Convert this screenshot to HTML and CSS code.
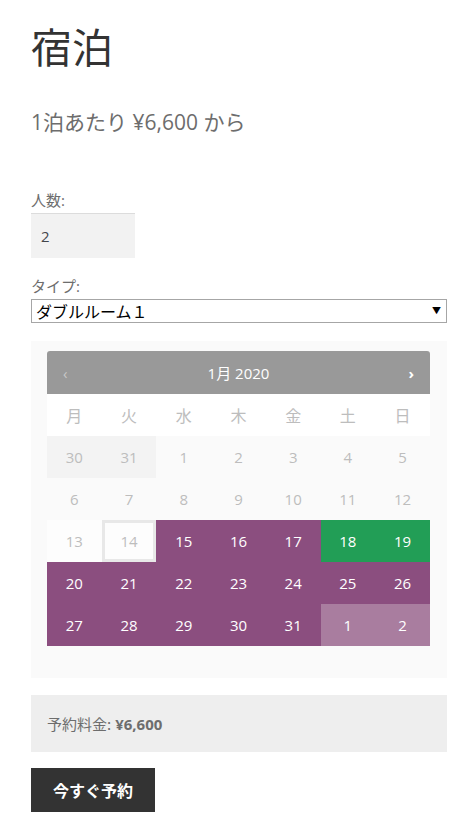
FILE: index.html
```html
<!DOCTYPE html>
<html lang="ja">
<head>
<meta charset="utf-8">
<title>宿泊</title>
<link rel="stylesheet" href="styles.css">
</head>
<body>
<div class="page">
  <h1 class="title">宿泊</h1>
  <p class="price-from">1泊あたり ¥6,600 から</p>

  <form class="booking">
    <div class="field">
      <label class="label" for="persons">人数:</label>
      <input class="persons" id="persons" type="text" value="2">
    </div>
    <div class="field field-type">
      <label class="label" for="type">タイプ:</label>
      <div class="select-wrap">
        <select class="select" id="type">
          <option>ダブルルーム１</option>
        </select>
      </div>
    </div>

    <div class="calendar">
      <div class="cal-head">
        <span class="cal-prev">‹</span>
        <span class="cal-month">1月 2020</span>
        <span class="cal-next">›</span>
      </div>
      <table class="cal-table">
        <thead>
          <tr><th>月</th><th>火</th><th>水</th><th>木</th><th>金</th><th>土</th><th>日</th></tr>
        </thead>
        <tbody>
          <tr>
            <td class="d-prev">30</td><td class="d-prev">31</td><td class="d-off">1</td><td class="d-off">2</td><td class="d-off">3</td><td class="d-off">4</td><td class="d-off">5</td>
          </tr>
          <tr>
            <td class="d-off">6</td><td class="d-off">7</td><td class="d-off">8</td><td class="d-off">9</td><td class="d-off">10</td><td class="d-off">11</td><td class="d-off">12</td>
          </tr>
          <tr>
            <td class="d-white">13</td><td class="d-today">14</td><td class="d-on">15</td><td class="d-on">16</td><td class="d-on">17</td><td class="d-sel">18</td><td class="d-sel">19</td>
          </tr>
          <tr>
            <td class="d-on">20</td><td class="d-on">21</td><td class="d-on">22</td><td class="d-on">23</td><td class="d-on">24</td><td class="d-on">25</td><td class="d-on">26</td>
          </tr>
          <tr>
            <td class="d-on">27</td><td class="d-on">28</td><td class="d-on">29</td><td class="d-on">30</td><td class="d-on">31</td><td class="d-next">1</td><td class="d-next">2</td>
          </tr>
        </tbody>
      </table>
    </div>

    <div class="total">予約料金: <strong class="total-amount">¥6,600</strong></div>

    <button class="book" type="button">今すぐ予約</button>
  </form>
</div>
</body>
</html>
```

FILE: styles.css
```css
* { box-sizing: border-box; }

html, body {
  margin: 0;
  padding: 0;
  background: #ffffff;
}

body {
  font-family: "Open Sans", "Noto Sans CJK JP", sans-serif;
  color: #6d6d6d;
  font-size: 15px;
}

.page {
  padding: 15px 19px 0 31px;
}

.title {
  margin: 0;
  font-family: "Noto Sans CJK JP", sans-serif;
  font-size: 41px;
  font-weight: 400;
  line-height: 60px;
  color: #333333;
}

.price-from {
  margin: 32px 0 0;
  font-size: 21px;
  line-height: 30px;
  color: #6d6d6d;
}

.booking {
  margin-top: 52px;
}

.field {
  display: flex;
  flex-direction: column;
  align-items: flex-start;
}

.label {
  font-size: 15px;
  line-height: 22px;
  color: #6d6d6d;
}

.persons {
  margin-top: 2px;
  width: 104px;
  height: 45px;
  padding: 0 10px;
  border: 0;
  border-top: 1px solid #dcdcdc;
  background: #f2f2f2;
  font-family: "Open Sans", sans-serif;
  font-size: 15px;
  color: #43454b;
  outline: none;
}

.field-type {
  margin-top: 17px;
  align-items: stretch;
}

.select-wrap {
  position: relative;
  margin-top: 2px;
}

.select {
  display: block;
  width: 100%;
  height: 24px;
  padding: 0 20px 0 4px;
  border: 1px solid #a6a6a6;
  border-radius: 0;
  background: #ffffff;
  -webkit-appearance: none;
  appearance: none;
  font-family: "Noto Sans CJK JP", sans-serif;
  font-size: 16px;
  line-height: 22px;
  color: #000000;
}

.select-wrap::after {
  content: "▼";
  position: absolute;
  right: 6px;
  top: 6px;
  font-size: 9px;
  line-height: 12px;
  color: #000000;
  pointer-events: none;
}

.calendar {
  margin-top: 18px;
  padding: 10px 17px 32px 16px;
  background: #fafafa;
}

.cal-head {
  display: flex;
  align-items: center;
  justify-content: space-between;
  height: 43px;
  padding: 0 16px 0 16px;
  background: #999999;
  border-radius: 3px 3px 0 0;
  color: #ffffff;
}

.cal-prev {
  font-size: 15px;
  color: #c8c8c8;
  width: 10px;
}

.cal-next {
  font-size: 15px;
  font-weight: 700;
  color: #ffffff;
  width: 10px;
  text-align: right;
}

.cal-month {
  font-size: 15px;
  font-family: "Open Sans", "Noto Sans CJK JP", sans-serif;
}

.cal-table {
  width: 100%;
  border-collapse: collapse;
  table-layout: fixed;
}

.cal-table th {
  height: 42px;
  background: #ffffff;
  font-family: "Noto Sans CJK JP", sans-serif;
  font-weight: 400;
  font-size: 16px;
  color: #bdbdbd;
  padding: 0;
}

.cal-table td {
  height: 42px;
  padding: 0;
  text-align: center;
  font-size: 15px;
  color: #bdbdbd;
}

.cal-table .d-prev { background: #f3f3f3; }
.cal-table .d-off { background: #fafafa; }
.cal-table .d-white { background: #fdfdfd; }

.cal-table .d-today {
  background: #fdfdfd;
  box-shadow: inset 0 0 0 3px #e8e8e8;
}

.cal-table .d-on {
  background: #8b4e7f;
  color: #ffffff;
  font-weight: 500;
}

.cal-table .d-sel {
  background: #229e56;
  color: #ffffff;
  font-weight: 500;
}

.cal-table .d-next {
  background: #a97d9f;
  color: #ffffff;
  font-weight: 500;
}

.total {
  margin-top: 17px;
  height: 57px;
  display: flex;
  align-items: center;
  padding: 0 16px;
  background: #eeeeee;
  font-family: "Noto Sans CJK JP", sans-serif;
  font-size: 15px;
  color: #6d6d6d;
}

.total-amount {
  margin-left: 4px;
  font-family: "Open Sans", sans-serif;
  font-weight: 700;
}

.book {
  margin-top: 16px;
  height: 44px;
  padding: 0 22px;
  border: 0;
  background: #333333;
  color: #ffffff;
  font-family: "Noto Sans CJK JP", sans-serif;
  font-size: 16px;
  font-weight: 700;
}
```
